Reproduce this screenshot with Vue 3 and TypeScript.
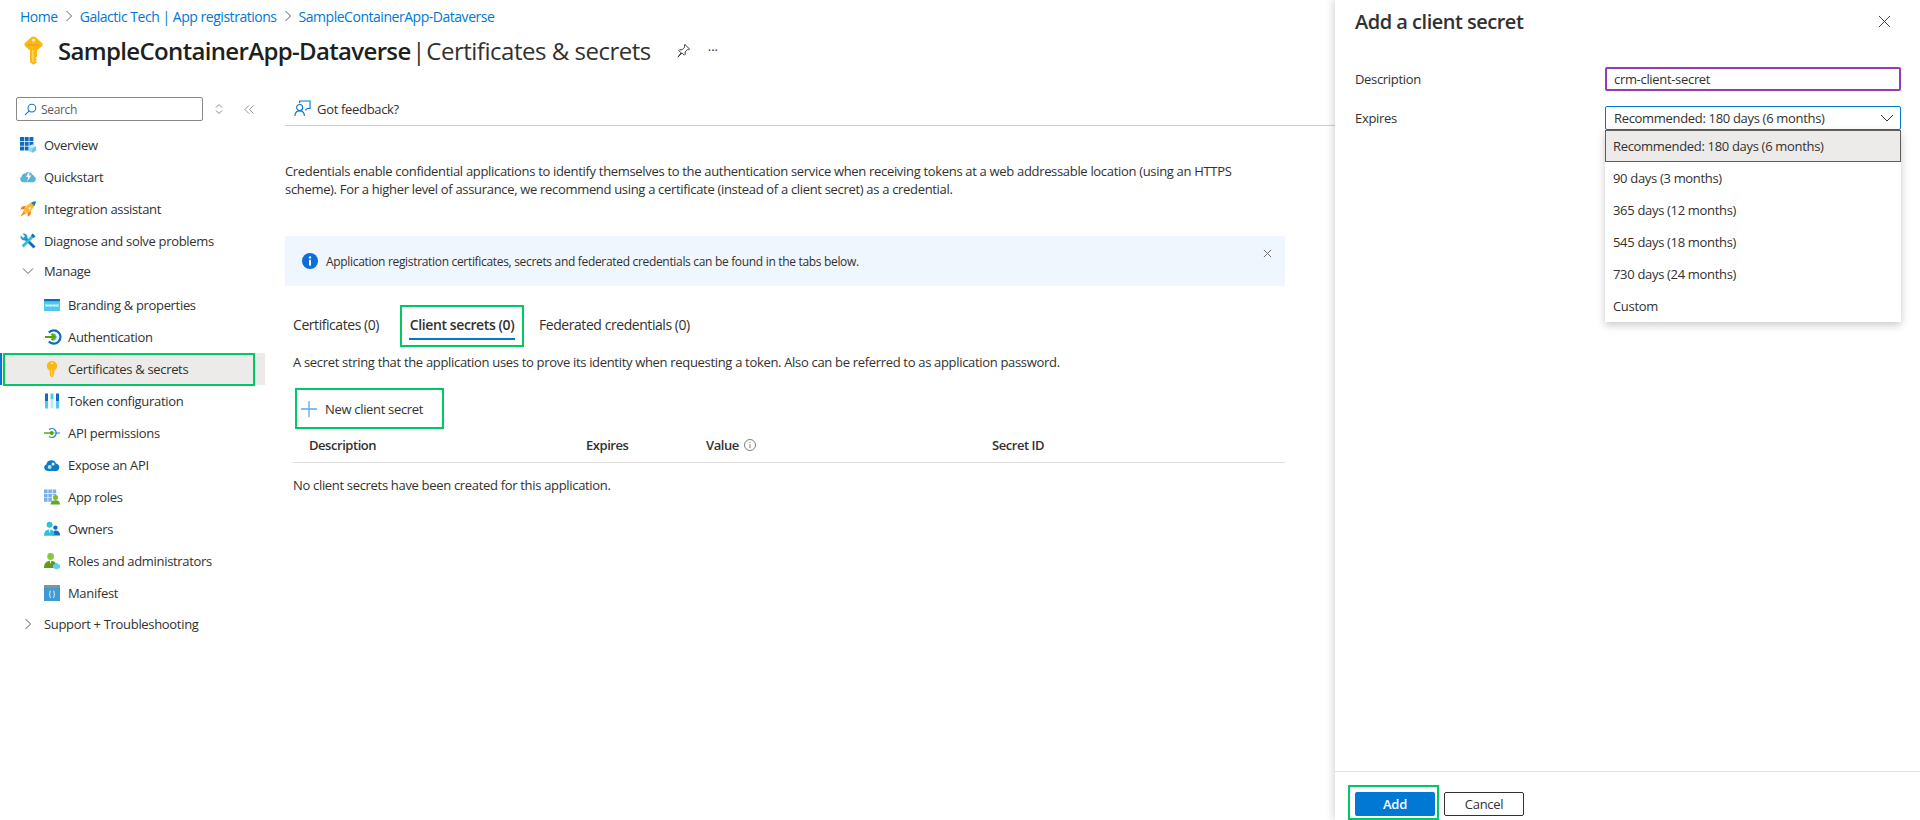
<script setup lang="ts">
interface Shape { d: string; fill?: string; stroke?: string; w?: number }
interface NavItem { label: string; icon: string }

const icons: Record<string, Shape[]> = {
  overview: [
    { d: 'M0 0h4v4H0zM4.700 0h4v4h-4zM9.400 0h4v4h-4zM0 4.700h4v4H0zM4.700 4.700h4v4h-4zM9.400 4.700h4v4h-4zM0 9.400h4v4H0zM4.700 9.400h4v4h-4z', fill: '#0f6cbd' },
    { d: 'M8.500 9.500l3.700-2 3.800 2v4.300l-3.800 2-3.700-2z', fill: '#9bd6ee' },
    { d: 'M8.500 9.500l3.700-2 3.800 2-3.800 2z', fill: '#c9ebf7' },
    { d: 'M12.200 11.500v4.300l3.800-2V9.500z', fill: '#6fc3e6' },
  ],
  quickstart: [
    { d: 'M3 13.200A3 3 0 0 1 1.800 7.500 3.300 3.300 0 0 1 5 4.500 4.300 4.300 0 0 1 12.200 5.500 3.300 3.300 0 0 1 14.200 7.500 3 3 0 0 1 13 13.200z', fill: '#59b4d9' },
    { d: 'M9.800 1.500 6 8h2.400L7 12.800l4.400-6.300H9z', fill: '#ffffff' },
  ],
  rocket: [
    { d: 'M15.800.2C10.500.8 6 4.500 3.800 9.200l3 3C11.500 10 15.200 5.500 15.800.2z', fill: '#fbb62a' },
    { d: 'M15.800.2c-1.800.2-3.300.8-4.700 1.500l3.200 3.200c.8-1.400 1.300-3 1.500-4.700z', fill: '#0f7cc8' },
    { d: 'M6 4.800 2 5.600.3 8.400l4-.2zM11.200 10l-.8 4-2.800 1.700.2-4z', fill: '#f47b20' },
    { d: 'M3.800 9.800.2 15.800l6-3.600z', fill: '#f7941e' },
    { d: 'M8.600 7.300a1.300 1.300 0 1 0 2.600 0 1.300 1.300 0 1 0-2.600 0z', fill: '#fff3c9' },
  ],
  tools: [
    { d: 'M5 5l9.500 9.500', stroke: '#0f6cbd', w: 2.800 },
    { d: 'M.6 2.600 3.200 5l1.800-1.800L2.600.6A3.900 3.900 0 0 1 7.200 5.800L5.800 7.200A3.900 3.900 0 0 1 .6 2.600z', fill: '#1d9bd6' },
    { d: 'M13.800 2.200 2.600 13.400', stroke: '#32bedd', w: 2.800 },
    { d: 'M12.600.6 15.400 3.400 13.600 5 11 2.400z', fill: '#0f6cbd' },
  ],
  branding: [
    { d: 'M0 2h16v12H0z', fill: '#50c8e8' },
    { d: 'M0 2h16v2.200H0z', fill: '#0f6cbd' },
    { d: 'M1 7h14v3H1z', fill: '#8fdcf0' },
    { d: 'M2 8.500h2.500M5.500 8.500H8M9 8.500h2.500M12.500 8.500H14', stroke: '#ffffff', w: 0.8 },
  ],
  auth: [
    { d: 'M4.800 3.500A6.700 6.700 0 1 1 4.800 12.500', stroke: '#0f6cbd', w: 2.200 },
    { d: 'M7 6.400A2.800 2.800 0 1 1 7 9.600', stroke: '#32bedd', w: 1.200 },
    { d: 'M1 8h10M7.800 4.800 11 8l-3.200 3.200', stroke: '#57a300', w: 1.800 },
  ],
  key: [
    { d: 'M8 0C11 0 13.200 2.400 13.200 5 13.200 7 12 8.600 10.200 9.400V12.300L9.400 13 10.200 13.800 9.400 14.800 8.600 16H7.400L5.800 14.800V9.400C4 8.600 2.800 7 2.800 5 2.800 2.400 5 0 8 0z', fill: '#fcb714' },
    { d: 'M6.800 1.600h2.400v1.400H6.800z', fill: '#fff0b0' },
    { d: 'M7.200 8.500h1.200V15H7.200z', fill: '#ffd34d' },
  ],
  token: [
    { d: 'M1 .5h3v8H1zM12 .5h3v8h-3z', fill: '#0f6cbd' },
    { d: 'M1 8.500h3v7H1zM12 8.500h3v7h-3z', fill: '#50c8e8' },
    { d: 'M6.500 .5h3v6h-3z', fill: '#50c8e8' },
    { d: 'M6.500 6.500h3v9h-3z', fill: '#b8ecf7' },
  ],
  api: [
    { d: 'M0 8h7', stroke: '#57a300', w: 1.400 },
    { d: 'M10.500 8H16', stroke: '#50a8d8', w: 1.400 },
    { d: 'M5 4.600A4.400 4.400 0 1 1 5 11.400', stroke: '#1d8ccf', w: 1.300 },
    { d: 'M5.800 8a2 2 0 1 0 4 0 2 2 0 1 0-4 0z', fill: '#57a300' },
  ],
  cloud: [
    { d: 'M3.400 14A3.300 3.300 0 0 1 2.400 7.600 5 5 0 0 1 12 6.400 3.900 3.900 0 0 1 12.500 14z', fill: '#0f7cc8' },
    { d: 'M3.800 10a1.900 1.900 0 1 0 3.800 0 1.900 1.900 0 1 0-3.800 0z', fill: '#b9e4f5' },
    { d: 'M7.600 7a1.500 1.500 0 1 0 3 0 1.500 1.500 0 1 0-3 0z', fill: '#e6f6fc' },
  ],
  roles: [
    { d: 'M0 .5h3.600v3.600H0zM4.300 .5h3.600v3.600H4.300zM8.600 .5h3.600v3.600H8.600zM0 4.800h3.600v3.600H0zM4.300 4.800h3.600v3.600H4.300zM8.600 4.800h3.600v1.500H8.600zM0 9.100h3.600v3.600H0zM4.300 9.100h3.600v3.600H4.300z', fill: '#78b0ec' },
    { d: 'M9 8.500a2.500 2.500 0 1 0 5 0 2.500 2.500 0 1 0-5 0z', fill: '#76bc2d' },
    { d: 'M6.600 15.600c0-3 2-4.400 4.900-4.400s4.500 1.400 4.500 4.400z', fill: '#5fa821' },
  ],
  owners: [
    { d: 'M9.200 6.600a2.200 2.200 0 1 0 4.400 0 2.200 2.200 0 1 0-4.400 0z', fill: '#0f6cbd' },
    { d: 'M8.500 14.500c0-3 1-5 3-5s4.500.9 4.500 5z', fill: '#0f6cbd' },
    { d: 'M2.600 3.800a3 3 0 1 0 6 0 3 3 0 1 0-6 0z', fill: '#32bedd' },
    { d: 'M0 14.800c0-4.200 2.200-6.200 5.500-6.200s5 2 5 6.200z', fill: '#32bedd' },
    { d: 'M4.700 8.600h1.800L5.600 12z', fill: '#ffffff' },
  ],
  admins: [
    { d: 'M3.200 3.500a3.400 3.400 0 1 0 6.800 0 3.400 3.400 0 1 0-6.800 0z', fill: '#8cc63f' },
    { d: 'M0 15c0-4.800 2.600-7.200 6.600-7.200 3 0 4.800 1.200 5.600 3.400L9 15z', fill: '#5f9a1f' },
    { d: 'M5.700 7.800h1.800L6.600 11z', fill: '#ffffff' },
    { d: 'M9 12 12.500 9.800 16 12v3l-3.500 1.500L9 15z', fill: '#5fd0ef' },
  ],
  manifest: [
    { d: 'M0 0h16v16H0z', fill: '#3f9bd1' },
    { d: 'M0 0h16v3H0z', fill: '#8a8f95' },
    { d: 'M6.800 5.800C5.800 5.800 6 6.800 6 7.800 6 8.700 5.600 9.100 5.200 9.200 5.600 9.300 6 9.700 6 10.600 6 11.800 5.800 12.600 6.800 12.600M9.200 5.800C10.200 5.800 10 6.800 10 7.800 10 8.700 10.400 9.100 10.800 9.200 10.400 9.300 10 9.700 10 10.600 10 11.800 10.200 12.600 9.200 12.600', stroke: '#ffffff', w: 0.900 },
  ],
}

const topItems: NavItem[] = [
  { label: 'Overview', icon: 'overview' },
  { label: 'Quickstart', icon: 'quickstart' },
  { label: 'Integration assistant', icon: 'rocket' },
  { label: 'Diagnose and solve problems', icon: 'tools' },
]
const manageItems: NavItem[] = [
  { label: 'Branding & properties', icon: 'branding' },
  { label: 'Authentication', icon: 'auth' },
  { label: 'Certificates & secrets', icon: 'key' },
  { label: 'Token configuration', icon: 'token' },
  { label: 'API permissions', icon: 'api' },
  { label: 'Expose an API', icon: 'cloud' },
  { label: 'App roles', icon: 'roles' },
  { label: 'Owners', icon: 'owners' },
  { label: 'Roles and administrators', icon: 'admins' },
  { label: 'Manifest', icon: 'manifest' },
]
const expiryOptions = [
  'Recommended: 180 days (6 months)',
  '90 days (3 months)',
  '365 days (12 months)',
  '545 days (18 months)',
  '730 days (24 months)',
  'Custom',
]
</script>

<template>
  <div class="page">
    <div class="main">
      <nav class="crumbs">
        <a>Home</a>
        <svg class="crumb-sep" viewBox="0 0 8 12"><path d="M1.500 1l5 5-5 5" /></svg>
        <a>Galactic Tech | App registrations</a>
        <svg class="crumb-sep" viewBox="0 0 8 12"><path d="M1.500 1l5 5-5 5" /></svg>
        <a>SampleContainerApp-Dataverse</a>
      </nav>

      <header class="title-row">
        <svg class="title-key" viewBox="0 0 19 29">
          <path d="M9.500 .5C10.500 .5 11.300 1 12 1.600L17.800 6.800C19 8 19 9 17.800 10.200L13 14.500V20.500L11.600 22 13 23.500 11.600 25 13 26.300 9.500 28.800 6 26.300V14.500L1.200 10.200C0 9 0 8 1.200 6.800L7 1.600C7.700 1 8.500 .5 9.500 .5z" fill="#fcb714" />
          <path d="M8 3h3v2.600H8z" fill="#fff0b0" />
          <path d="M3.500 8h12v2h-12z" fill="#f5a81c" />
          <path d="M8 14h1.800v12H8z" fill="#ffd34d" />
        </svg>
        <h1><strong>SampleContainerApp-Dataverse</strong><span class="title-sep"> | </span><span class="title-page">Certificates &amp; secrets</span></h1>
        <svg class="pin" viewBox="0 0 16 16"><path d="M9.500 1.500l5 5-1 .6-1-.3-2.800 2.800.2 2.400-1 1-2.400-2.400L2 15l3.400-4.500L3 8.100l1-1 2.400.2L9.200 4.500 9 3.400z" /></svg>
        <span class="more">···</span>
      </header>

      <div class="body">
        <aside class="side">
          <div class="side-tools">
            <div class="search">
              <svg viewBox="0 0 14 14"><circle cx="8.500" cy="5.500" r="4.200" /><path d="M5.500 8.500 1 13" /></svg>
              <span>Search</span>
            </div>
            <svg class="updown" viewBox="0 0 10 12"><path d="M2 4.500 5 1.500l3 3M2 7.500l3 3 3-3" /></svg>
            <svg class="collapse" viewBox="0 0 12 12"><path d="M5.500 1.500 1 6l4.500 4.500M10.500 1.500 6 6l4.500 4.500" /></svg>
          </div>

          <ul class="nav">
            <li v-for="item in topItems" :key="item.label" class="nav-item">
              <svg class="nav-icon" viewBox="0 0 16 16">
                <path v-for="(s, i) in icons[item.icon]" :key="i" :d="s.d" :fill="s.fill ?? 'none'" :stroke="s.stroke" :stroke-width="s.w" />
              </svg>
              {{ item.label }}
            </li>
            <li class="nav-group">
              <svg class="chev" viewBox="0 0 12 12"><path d="M1 3.500l5 5 5-5" /></svg>
              Manage
            </li>
            <li
              v-for="item in manageItems"
              :key="item.label"
              class="nav-item sub"
              :class="{ active: item.icon === 'key' }"
            >
              <svg class="nav-icon" viewBox="0 0 16 16">
                <path v-for="(s, i) in icons[item.icon]" :key="i" :d="s.d" :fill="s.fill ?? 'none'" :stroke="s.stroke" :stroke-width="s.w" />
              </svg>
              {{ item.label }}
              <span v-if="item.icon === 'key'" class="mark"></span>
            </li>
            <li class="nav-group last">
              <svg class="chev" viewBox="0 0 12 12"><path d="M3.500 1l5 5-5 5" /></svg>
              Support + Troubleshooting
            </li>
          </ul>
        </aside>

        <section class="content">
          <div class="toolbar">
            <svg class="fb" viewBox="0 0 18 18">
              <path d="M6 3.500V1h11v8h-3l-2 2" />
              <circle cx="6" cy="8" r="3.200" />
              <path d="M1 17c0-3.500 2-5.500 5-5.500s5 2 5 5.500" />
            </svg>
            <span>Got feedback?</span>
          </div>

          <p class="intro">Credentials enable confidential applications to identify themselves to the authentication service when receiving tokens at a web addressable location (using an HTTPS<br />scheme). For a higher level of assurance, we recommend using a certificate (instead of a client secret) as a credential.</p>

          <div class="notice">
            <svg class="notice-i" viewBox="0 0 16 16">
              <circle cx="8" cy="8" r="8" fill="#0f6cdb" />
              <rect x="7" y="6.800" width="2" height="5.800" fill="#fff" />
              <circle cx="8" cy="4.400" r="1.200" fill="#fff" />
            </svg>
            <span>Application registration certificates, secrets and federated credentials can be found in the tabs below.</span>
            <svg class="notice-x" viewBox="0 0 10 10"><path d="M1 1l8 8M9 1l-8 8" /></svg>
          </div>

          <div class="tabs">
            <span class="tab">Certificates (0)</span>
            <span class="tab current"><b>Client secrets (0)</b></span>
            <span class="tab">Federated credentials (0)</span>
          </div>

          <p class="hint">A secret string that the application uses to prove its identity when requesting a token. Also can be referred to as application password.</p>

          <button class="new-secret" type="button">
            <svg viewBox="0 0 16 16"><path d="M8 0v16M0 8h16" /></svg>
            New client secret
          </button>

          <div class="table-head">
            <span>Description</span>
            <span>Expires</span>
            <span class="value">Value
              <svg viewBox="0 0 12 12"><circle cx="6" cy="6" r="5.500" /><path d="M6 5.200v3.800M6 3v1" /></svg>
            </span>
            <span>Secret ID</span>
          </div>
          <p class="empty">No client secrets have been created for this application.</p>
        </section>
      </div>
    </div>

    <aside class="panel">
      <div class="panel-top">
        <div class="panel-head">
          <h2>Add a client secret</h2>
          <svg class="close" viewBox="0 0 14 14"><path d="M1 1l12 12M13 1 1 13" /></svg>
        </div>
        <div class="field">
          <label>Description</label>
          <div class="input">crm-client-secret</div>
        </div>
        <div class="field">
          <label>Expires</label>
          <div class="select">
            <span>Recommended: 180 days (6 months)</span>
            <svg viewBox="0 0 14 8"><path d="M1 1l6 6 6-6" /></svg>
            <ul class="menu">
              <li v-for="(o, i) in expiryOptions" :key="o" :class="{ picked: i === 0 }">{{ o }}</li>
            </ul>
          </div>
        </div>
      </div>
      <footer class="panel-foot">
        <span class="add-mark"><button class="add" type="button">Add</button></span>
        <button class="cancel" type="button">Cancel</button>
      </footer>
    </aside>
  </div>
</template>

<style scoped>
.page {
  display: flex;
  width: 1920px;
  height: 820px;
  overflow: hidden;
  background: #fff;
  color: #323130;
  font-family: "Open Sans", "Noto Sans", sans-serif;
  font-size: 13px;
  letter-spacing: -0.32px;
}
.main { flex: 1; min-width: 0; }
.crumbs {
  display: flex;
  align-items: center;
  height: 32px;
  padding-left: 20px;
  color: #0078d4;
  font-size: 14px;
  letter-spacing: -0.47px;
}
.crumb-sep {
  width: 8px;
  height: 12px;
  margin: 0 7px;
  fill: none;
  stroke: #605e5c;
  stroke-width: 1;
}
.title-row {
  display: flex;
  align-items: center;
  height: 36px;
  padding-left: 24px;
}
.title-key { width: 19px; height: 29px; margin-right: 15px; flex: none; }
h1 {
  margin: 0;
  font-size: 24px;
  font-weight: 400;
  letter-spacing: -0.66px;
  color: #323130;
  white-space: pre;
}
h1 strong { font-weight: 600; color: #201f1e; }
.title-sep { word-spacing: -4px; }
.title-page { letter-spacing: -0.48px; }
.pin {
  width: 15px;
  height: 15px;
  margin-left: 25px;
  fill: none;
  stroke: #323130;
  stroke-width: 1;
}
.more { margin-left: 17px; font-size: 13px; color: #323130; letter-spacing: 0; }

.body { display: flex; margin-top: 24px; }
.side { width: 265px; flex: none; padding-top: 5px; }
.side-tools { display: flex; align-items: center; padding-left: 16px; height: 24px; }
.search {
  display: flex;
  align-items: center;
  width: 187px;
  height: 24px;
  box-sizing: border-box;
  border: 1px solid #8a8886;
  border-radius: 2px;
  color: #605e5c;
  font-size: 12px;
}
.search svg {
  width: 13px;
  height: 13px;
  margin: 0 4px 0 7px;
  fill: none;
  stroke: #0078d4;
  stroke-width: 1.100;
}
.updown {
  width: 10px;
  height: 12px;
  margin-left: 11px;
  fill: none;
  stroke: #8a8886;
}
.collapse {
  width: 11px;
  height: 11px;
  margin-left: 20px;
  fill: none;
  stroke: #8a8886;
}
.nav { list-style: none; margin: 8px 0 0; padding: 0; }
.nav-item {
  position: relative;
  display: flex;
  align-items: center;
  height: 32px;
  padding-left: 20px;
  white-space: nowrap;
}
.nav-item.sub { padding-left: 44px; }
.nav-icon { width: 16px; height: 16px; margin-right: 8px; flex: none; overflow: visible; }
.nav-group {
  display: flex;
  align-items: center;
  height: 28px;
  margin-bottom: 4px;
  padding-left: 22px;
}
.nav-group.last { height: 30px; margin-bottom: 0; }
.chev {
  width: 12px;
  height: 12px;
  margin-right: 10px;
  fill: none;
  stroke: #605e5c;
  stroke-width: 1;
}
.nav-item.active { background: #edebe9; }
.mark {
  position: absolute;
  left: 3px;
  top: 0;
  width: 252px;
  height: 33px;
  box-sizing: border-box;
  border: 2px solid #00c864;
}
.nav-item.active::before {
  content: "";
  position: absolute;
  left: 0;
  top: 0;
  bottom: 0;
  width: 2px;
  background: #0078d4;
}

.content { flex: 1; min-width: 0; padding-left: 20px; }
.toolbar {
  display: flex;
  align-items: center;
  height: 34px;
  box-sizing: border-box;
  border-bottom: 1px solid #d2d0ce;
  padding-left: 9px;
}
.fb {
  width: 17px;
  height: 17px;
  margin-right: 6px;
  fill: none;
  stroke: #0078d4;
  stroke-width: 1.200;
}
.intro { margin: 36px 0 0; line-height: 18px; white-space: nowrap; }
.notice {
  position: relative;
  display: flex;
  align-items: center;
  width: 1000px;
  height: 50px;
  margin-top: 38px;
  padding-left: 17px;
  box-sizing: border-box;
  background: #eff6fe;
  font-size: 12px;
}
.notice-i { width: 16px; height: 16px; margin-right: 8px; }
.notice-x {
  position: absolute;
  right: 13px;
  top: 13px;
  width: 9px;
  height: 9px;
  fill: none;
  stroke: #605e5c;
}
.tabs {
  display: flex;
  align-items: flex-start;
  height: 42px;
  margin-top: 19px;
  padding-left: 8px;
  font-size: 14px;
  letter-spacing: -0.44px;
}
.tab { display: flex; align-items: center; height: 38px; white-space: nowrap; }
.tab:first-child { width: 107px; }
.tab b { font-weight: 600; letter-spacing: -0.4px; }
.tab.current {
  position: relative;
  box-sizing: border-box;
  justify-content: center;
  width: 124px;
  height: 42px;
  margin-right: 15px;
  padding-bottom: 4px;
  border: 2px solid #00c864;
}
.tab.current::after {
  content: "";
  position: absolute;
  left: 7px;
  right: 7px;
  bottom: 5px;
  height: 2px;
  background: #0078d4;
}
.hint { margin: 6px 0 0 8px; line-height: 18px; white-space: nowrap; }
.new-secret {
  display: flex;
  align-items: center;
  width: 149px;
  height: 41px;
  box-sizing: border-box;
  margin: 17px 0 0 10px;
  padding: 0 0 0 4px;
  border: 2px solid #00c864;
  background: #fff;
  color: #323130;
  font: inherit;
  letter-spacing: inherit;
}
.new-secret svg {
  width: 16px;
  height: 16px;
  margin-right: 8px;
  fill: none;
  stroke: #5ca9e6;
  stroke-width: 1.300;
}
.table-head {
  display: grid;
  grid-template-columns: 277px 120px 286px 1fr;
  align-items: center;
  width: 992px;
  height: 34px;
  box-sizing: border-box;
  margin-left: 8px;
  padding: 0 0 1px 16px;
  border-bottom: 1px solid #e1dfdd;
  font-weight: 600;
  letter-spacing: -0.45px;
}
.value { display: flex; align-items: center; gap: 5px; }
.value svg {
  width: 12px;
  height: 12px;
  fill: none;
  stroke: #605e5c;
  stroke-width: 0.800;
}
.empty { margin: 13px 0 0 8px; line-height: 18px; }

.panel {
  display: flex;
  flex-direction: column;
  flex: none;
  width: 585px;
  height: 820px;
  box-sizing: border-box;
  background: #fff;
  box-shadow: -2px 0 8px rgba(0, 0, 0, 0.16);
}
.panel-top { flex: 1; padding: 0 19px 0 20px; }
.panel-head {
  display: flex;
  align-items: center;
  justify-content: space-between;
  height: 43px;
  margin-bottom: 24px;
  padding-right: 10px;
}
h2 {
  margin: 0;
  font-size: 20px;
  font-weight: 600;
  letter-spacing: -0.5px;
  color: #323130;
}
.close {
  width: 13px;
  height: 13px;
  fill: none;
  stroke: #323130;
  stroke-width: 1;
}
.field {
  display: grid;
  grid-template-columns: 250px 296px;
  align-items: center;
  height: 24px;
  margin-bottom: 15px;
}
.input,
.select {
  position: relative;
  display: flex;
  align-items: center;
  height: 24px;
  box-sizing: border-box;
  padding-left: 8px;
  border: 1px solid #0078d4;
  border-radius: 2px;
}
.input { border: 2px solid #933bb0; padding-left: 7px; }
.select svg {
  position: absolute;
  right: 6px;
  top: 7px;
  width: 14px;
  height: 8px;
  fill: none;
  stroke: #323130;
}
.menu {
  position: absolute;
  left: -1px;
  right: -1px;
  top: 23px;
  z-index: 2;
  list-style: none;
  margin: 0;
  padding: 0;
  background: #fff;
  box-shadow: 0 3px 8px rgba(0, 0, 0, 0.22);
}
.menu li {
  display: flex;
  align-items: center;
  height: 32px;
  box-sizing: border-box;
  padding-left: 8px;
}
.menu li.picked { background: #edebe9; border: 1px solid #605e5c; padding-left: 7px; }
.panel-foot {
  display: flex;
  align-items: flex-start;
  height: 49px;
  box-sizing: border-box;
  border-top: 1px solid #e1dfdd;
  padding: 13px 0 0 13px;
}
.add-mark {
  display: block;
  flex: none;
  width: 91px;
  height: 35px;
  box-sizing: border-box;
  border: 2px solid #00c864;
  padding: 5px 5px 0;
  margin-right: 5px;
}
.add,
.cancel {
  display: block;
  width: 80px;
  height: 24px;
  padding: 0;
  border-radius: 2px;
  font: inherit;
  font-weight: 600;
  letter-spacing: inherit;
}
.add { border: 0; background: #0078d4; color: #fff; }
.cancel { margin-top: 7px; border: 1px solid #323130; background: #fff; color: #323130; font-weight: 400; }
</style>
